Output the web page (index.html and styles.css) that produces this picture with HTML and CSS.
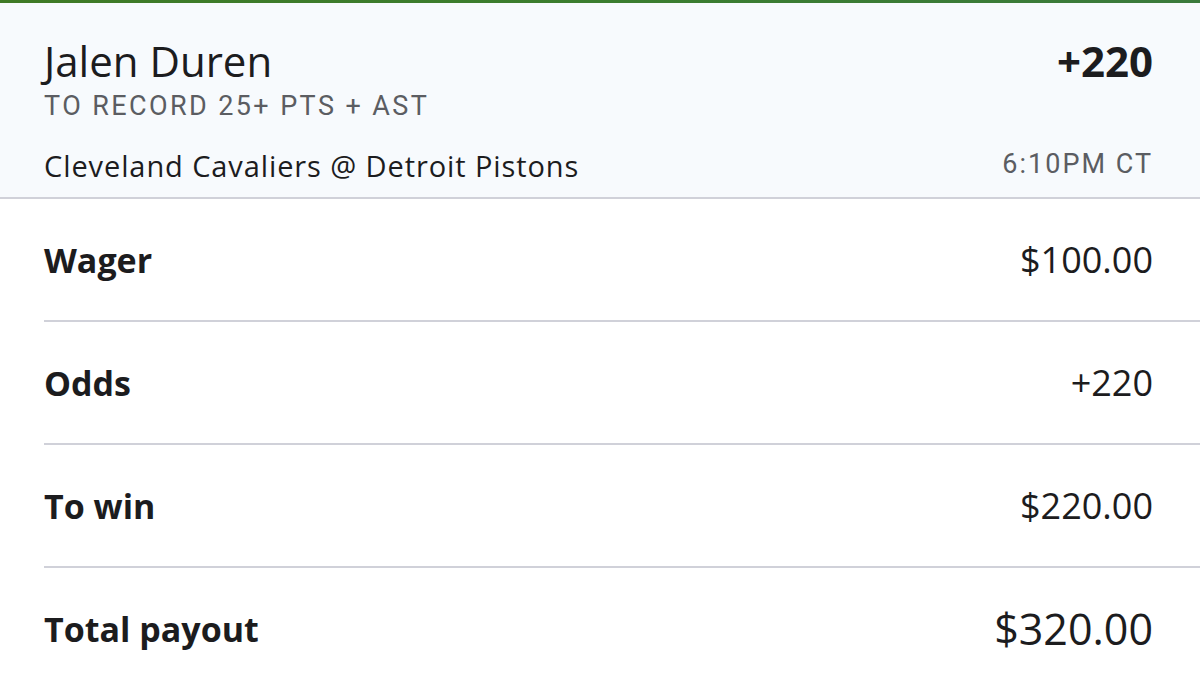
FILE: index.html
```html
<!DOCTYPE html>
<html lang="en">
<head>
<meta charset="utf-8">
<link rel="stylesheet" href="styles.css">
</head>
<body>
<div class="topbar"></div>
<header class="bet-header">
  <div class="line-1">
    <div class="player">Jalen Duren</div>
    <div class="odds-head">+220</div>
  </div>
  <div class="market">TO RECORD 25+ PTS + AST</div>
  <div class="line-3">
    <div class="game">Cleveland Cavaliers @ Detroit Pistons</div>
    <div class="time">6:10PM CT</div>
  </div>
</header>
<main class="rows">
  <div class="row"><span class="label">Wager</span><span class="value">$100.00</span></div>
  <div class="row"><span class="label">Odds</span><span class="value">+220</span></div>
  <div class="row"><span class="label">To win</span><span class="value">$220.00</span></div>
  <div class="row last"><span class="label">Total payout</span><span class="value big">$320.00</span></div>
</main>
</body>
</html>
```
FILE: styles.css
```css
html, body {
  margin: 0;
  padding: 0;
  background: #ffffff;
  width: 1200px;
  height: 682px;
  overflow: hidden;
  font-family: "Open Sans", "Noto Sans", sans-serif;
  color: #1c1c1e;
}
.topbar {
  height: 3px;
  background: linear-gradient(90deg, #3f7a26, #3b7d2f 50%, #3a7a3c);
}
.bet-header {
  background: #f7fafd;
  border-bottom: 2px solid #d0d1d9;
  padding: 33px 47px 14px 44px;
}
.line-1 {
  display: flex;
  justify-content: space-between;
  align-items: flex-start;
}
.player {
  font-size: 42px;
  font-weight: 400;
  line-height: 50px;
}
.odds-head {
  font-size: 42px;
  font-weight: 700;
  line-height: 50px;
}
.market {
  font-family: Roboto, sans-serif;
  font-size: 27px;
  letter-spacing: 2.4px;
  color: #5b5d62;
  line-height: 30px;
  margin-top: 5px;
}
.line-3 {
  display: flex;
  justify-content: space-between;
  align-items: flex-start;
  margin-top: 28px;
}
.game {
  font-size: 29px;
  letter-spacing: 0.9px;
  line-height: 34px;
}
.time {
  font-family: Roboto, sans-serif;
  font-size: 27px;
  letter-spacing: 2px;
  color: #5b5d62;
  line-height: 30px;
}
.rows {
  padding-left: 44px;
}
.row {
  display: flex;
  justify-content: space-between;
  align-items: center;
  height: 121px;
  border-bottom: 2px solid #d0d1d9;
  padding-right: 47px;
}
.row.last {
  border-bottom: none;
}
.label {
  font-size: 34px;
  font-weight: 700;
}
.value {
  font-size: 36px;
  font-weight: 400;
}
.value.big {
  font-size: 43px;
}
```
